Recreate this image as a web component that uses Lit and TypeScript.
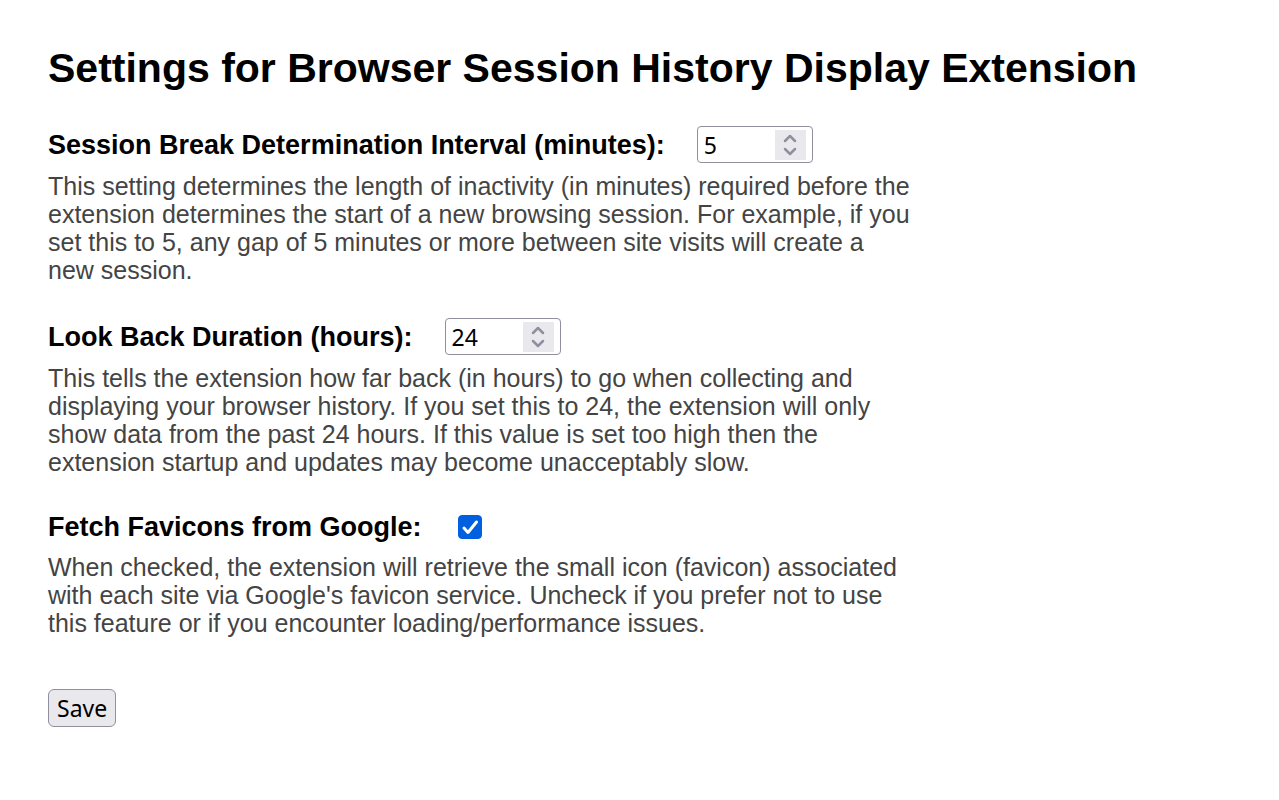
import { LitElement, html, css } from "lit";
import { customElement, property, state } from "lit/decorators.js";

@customElement("number-stepper")
class NumberStepper extends LitElement {
  @property({ type: Number }) value = 0;
  @property() label = "";

  static styles = css`
    :host { display: block; }
    .box {
      display: flex;
      align-items: center;
      box-sizing: border-box;
      width: 116px;
      height: 37px;
      padding: 0 6px;
      border: 1px solid #8f8f9d;
      border-radius: 4px;
      background: #fff;
    }
    .field {
      flex: 1;
      min-width: 0;
      padding: 0;
      border: 0;
      outline: 0;
      background: none;
      color: #000;
      font: 23px/32px "Noto Sans", sans-serif;
      appearance: textfield;
      -moz-appearance: textfield;
    }
    .field::-webkit-inner-spin-button { appearance: none; margin: 0; }
    .steps {
      display: flex;
      flex-direction: column;
      box-sizing: border-box;
      width: 31px;
      height: 30px;
      padding: 2px 0;
      background: #e9e9ed;
    }
    .step {
      flex: 1;
      display: flex;
      justify-content: center;
      align-items: center;
      padding: 0;
      border: 0;
      background: none;
    }
    .arrow { display: block; width: 14px; height: 9px; }
    .arrow path {
      fill: none;
      stroke: #8f8f9d;
      stroke-width: 2.5;
      stroke-linecap: round;
      stroke-linejoin: round;
    }
  `;

  private step(delta: number) {
    this.value = Math.max(1, this.value + delta);
  }

  render() {
    return html`
      <div class="box">
        <input class="field" type="number" min="1" aria-label=${this.label} .value=${String(this.value)}
          @input=${(e: Event) => (this.value = Number((e.target as HTMLInputElement).value))} />
        <div class="steps">
          <button class="step" type="button" aria-label="Increase" @click=${() => this.step(1)}>
            <svg class="arrow" viewBox="0 0 14 9"><path d="M2 7 L7 2 L12 7" /></svg>
          </button>
          <button class="step" type="button" aria-label="Decrease" @click=${() => this.step(-1)}>
            <svg class="arrow" viewBox="0 0 14 9"><path d="M2 2 L7 7 L12 2" /></svg>
          </button>
        </div>
      </div>
    `;
  }
}

@customElement("app-root")
class AppRoot extends LitElement {
  @state() private fetchIcons = true;

  static styles = css`
    :host {
      display: block;
      padding: 44px 48px;
      color: #000;
      background: #fff;
      font-family: "Liberation Sans", Arial, sans-serif;
    }
    .title { margin: 0 0 34px; font-size: 41px; line-height: 48px; }
    .setting { margin-bottom: 34px; }
    .row { display: flex; align-items: center; gap: 32px; min-height: 34px; }
    .name { font-size: 27px; line-height: 32px; font-weight: bold; }
    .note {
      max-width: 864px;
      margin: 9px 0 0;
      color: #444;
      font-size: 25px;
      line-height: 28px;
    }
    .check {
      appearance: none;
      width: 24px;
      height: 24px;
      margin: 0 4px;
      border: 1px solid #8f8f9d;
      border-radius: 4px;
      background: #fff;
    }
    .check:checked {
      border-color: #0060df;
      background: #0060df url("data:image/svg+xml,%3Csvg xmlns='http://www.w3.org/2000/svg' viewBox='0 0 24 24'%3E%3Cpath d='M6 13l4 4.5L18.5 7' fill='none' stroke='white' stroke-width='3' stroke-linecap='round' stroke-linejoin='round'/%3E%3C/svg%3E") center / 24px no-repeat;
    }
    .save {
      height: 38px;
      margin-top: 18px;
      padding: 0 8px;
      border: 1px solid #8f8f9d;
      border-radius: 6px;
      background: #e9e9ed;
      color: #000;
      font: 23px/32px "Noto Sans", sans-serif;
    }
  `;

  render() {
    return html`
      <h1 class="title">Settings for Browser Session History Display Extension</h1>
      <form @submit=${(e: Event) => e.preventDefault()}>
        <div class="setting">
          <div class="row">
            <span class="name">Session Break Determination Interval (minutes):</span>
            <number-stepper label="Session Break Determination Interval (minutes)" .value=${5}></number-stepper>
          </div>
          <p class="note">This setting determines the length of inactivity (in minutes) required before the extension determines the start of a new browsing session. For example, if you set this to 5, any gap of 5 minutes or more between site visits will create a new session.</p>
        </div>
        <div class="setting">
          <div class="row">
            <span class="name">Look Back Duration (hours):</span>
            <number-stepper label="Look Back Duration (hours)" .value=${24}></number-stepper>
          </div>
          <p class="note">This tells the extension how far back (in hours) to go when collecting and displaying your browser history. If you set this to 24, the extension will only show data from the past 24 hours. If this value is set too high then the extension startup and updates may become unacceptably slow.</p>
        </div>
        <div class="setting">
          <div class="row">
            <label class="name" for="icons">Fetch Favicons from Google:</label>
            <input class="check" id="icons" type="checkbox" .checked=${this.fetchIcons}
              @change=${(e: Event) => (this.fetchIcons = (e.target as HTMLInputElement).checked)} />
          </div>
          <p class="note">When checked, the extension will retrieve the small icon (favicon) associated with each site via Google's favicon service. Uncheck if you prefer not to use this feature or if you encounter loading/performance issues.</p>
        </div>
        <button class="save" type="submit">Save</button>
      </form>
    `;
  }
}
